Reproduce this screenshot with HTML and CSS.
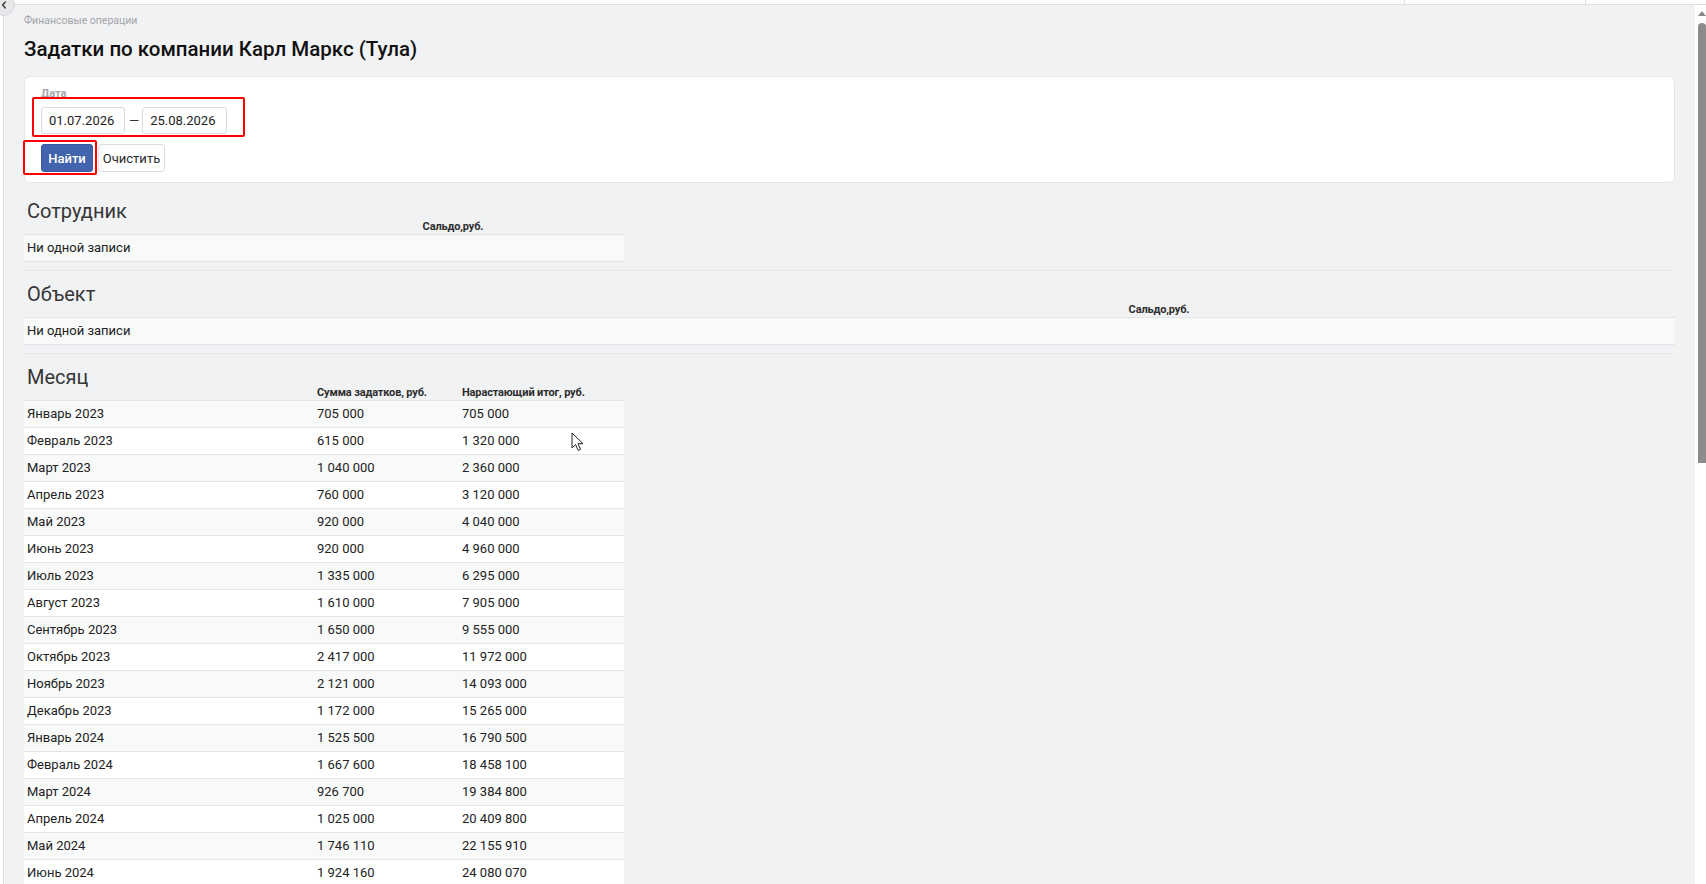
FILE: index.html
```html
<!DOCTYPE html>
<html lang="ru">
<head>
<meta charset="utf-8">
<title>Задатки по компании Карл Маркс (Тула)</title>
<link rel="stylesheet" href="styles.css">
</head>
<body>
<div class="frame">
  <div class="topbar">
    <div class="tb-seg tb-main"></div>
    <div class="tb-seg tb-a"></div>
    <div class="tb-seg tb-b"></div>
  </div>
  <div class="row">
    <div class="rail"></div>
    <main class="content">
      <div class="crumb">Финансовые операции</div>
      <h1 class="title">Задатки по компании Карл Маркс (Тула)</h1>

      <form class="card">
        <div class="label">Дата</div>
        <div class="range">
          <input class="inp" type="text" value="01.07.2026">
          <span class="dash">—</span>
          <input class="inp inp2" type="text" value="25.08.2026">
        </div>
        <div class="btns">
          <button type="button" class="btn btn-primary">Найти</button>
          <button type="button" class="btn btn-plain">Очистить</button>
        </div>
        <div class="mark mark-range"></div>
        <div class="mark mark-btn"></div>
      </form>

      <section class="report report-first">
        <h2 class="sec-title">Сотрудник</h2>
        <table class="tbl tbl-600">
          <thead><tr><th class="w-emp"></th><th class="center">Сальдо,руб.</th></tr></thead>
          <tbody><tr class="odd"><td colspan="2">Ни одной записи</td></tr></tbody>
        </table>
      </section>
      <hr class="sep">

      <section class="report">
        <h2 class="sec-title">Объект</h2>
        <table class="tbl tbl-full">
          <thead><tr><th class="w-obj"></th><th class="center">Сальдо,руб.</th></tr></thead>
          <tbody><tr class="odd"><td colspan="2">Ни одной записи</td></tr></tbody>
        </table>
      </section>
      <hr class="sep">

      <section class="report">
        <h2 class="sec-title">Месяц</h2>
        <table class="tbl tbl-600">
          <thead><tr><th class="w-m1"></th><th class="w-m2">Сумма задатков, руб.</th><th>Нарастающий итог, руб.</th></tr></thead>
          <tbody>
            <tr class="odd"><td>Январь 2023</td><td>705 000</td><td>705 000</td></tr>
            <tr><td>Февраль 2023</td><td>615 000</td><td>1 320 000</td></tr>
            <tr class="odd"><td>Март 2023</td><td>1 040 000</td><td>2 360 000</td></tr>
            <tr><td>Апрель 2023</td><td>760 000</td><td>3 120 000</td></tr>
            <tr class="odd"><td>Май 2023</td><td>920 000</td><td>4 040 000</td></tr>
            <tr><td>Июнь 2023</td><td>920 000</td><td>4 960 000</td></tr>
            <tr class="odd"><td>Июль 2023</td><td>1 335 000</td><td>6 295 000</td></tr>
            <tr><td>Август 2023</td><td>1 610 000</td><td>7 905 000</td></tr>
            <tr class="odd"><td>Сентябрь 2023</td><td>1 650 000</td><td>9 555 000</td></tr>
            <tr><td>Октябрь 2023</td><td>2 417 000</td><td>11 972 000</td></tr>
            <tr class="odd"><td>Ноябрь 2023</td><td>2 121 000</td><td>14 093 000</td></tr>
            <tr><td>Декабрь 2023</td><td>1 172 000</td><td>15 265 000</td></tr>
            <tr class="odd"><td>Январь 2024</td><td>1 525 500</td><td>16 790 500</td></tr>
            <tr><td>Февраль 2024</td><td>1 667 600</td><td>18 458 100</td></tr>
            <tr class="odd"><td>Март 2024</td><td>926 700</td><td>19 384 800</td></tr>
            <tr><td>Апрель 2024</td><td>1 025 000</td><td>20 409 800</td></tr>
            <tr class="odd"><td>Май 2024</td><td>1 746 110</td><td>22 155 910</td></tr>
            <tr><td>Июнь 2024</td><td>1 924 160</td><td>24 080 070</td></tr>
          </tbody>
        </table>
      </section>

      <svg class="cursor" width="14" height="20" viewBox="0 0 14 20"><path d="M1 1 L1 16 L4.6 12.6 L7.2 18.4 L9.6 17.3 L7 11.7 L12 11.7 Z" fill="#fff" stroke="#222" stroke-width="1" stroke-linejoin="round"/></svg>
    </main>
    <div class="scrollbar">
      <div class="sb-arrow"></div>
      <div class="sb-thumb"></div>
    </div>
  </div>
  <div class="toggle"><svg width="8" height="8" viewBox="0 0 8 8"><path d="M5.3 1 L2.6 4 L5.3 7" fill="none" stroke="#3a3a3a" stroke-width="1.4" stroke-linecap="round" stroke-linejoin="round"/></svg></div>
</div>
</body>
</html>
```

FILE: styles.css
```css
html, body {
  margin: 0;
  padding: 0;
  background: #ffffff;
  font-family: Roboto, "Noto Sans", sans-serif;
  color: #1f1f1f;
  overflow: hidden;
}

.frame {
  position: relative;
  width: 1706px;
  height: 884px;
  display: flex;
  flex-direction: column;
  overflow: hidden;
}

.topbar {
  height: 4px;
  flex: 0 0 4px;
  display: flex;
  background: #ffffff;
  border-bottom: 1px solid #dcdee2;
}
.tb-seg { height: 100%; }
.tb-main { width: 1404px; border-right: 1px solid #dcdee2; }
.tb-a { width: 180px; border-right: 1px solid #dcdee2; }
.tb-b { flex: 1; }

.toggle {
  position: absolute;
  z-index: 5;
  left: -7px;
  top: -6px;
  width: 22px;
  height: 22px;
  box-sizing: border-box;
  border-radius: 50%;
  background: #e6e7e9;
  border: 1px solid #d6d8db;
  display: flex;
  align-items: center;
  justify-content: center;
}
.toggle svg { display: block; }

.row {
  flex: 1;
  display: flex;
  min-height: 0;
}

.rail {
  width: 3px;
  flex: 0 0 3px;
  background: #ffffff;
  border-right: 1px solid #dcdee2;
}

.content {
  position: relative;
  flex: 1;
  background: #f1f2f4;
  padding: 9px 20px 0 20px;
  min-width: 0;
}

.crumb {
  font-size: 10.5px;
  line-height: 14px;
  color: #a3a5a8;
}

.title {
  margin: 7px 0 13px 0;
  font-size: 20.5px;
  line-height: 28px;
  font-weight: 500;
  color: #111111;
}

.card {
  position: relative;
  margin: 0;
  background: #ffffff;
  border: 1px solid #e4e6e9;
  border-radius: 6px;
  padding: 10px 16px 10px 16px;
}

.label {
  font-size: 11px;
  line-height: 14px;
  font-weight: 700;
  color: #a4a6a9;
}

.range {
  display: flex;
  align-items: center;
  margin-top: 6px;
  height: 27px;
}

.inp {
  box-sizing: border-box;
  width: 84px;
  height: 27px;
  border: 1px solid #d9dbde;
  border-radius: 3px;
  padding: 0 0 0 7px;
  font-family: Roboto, sans-serif;
  font-size: 13px;
  color: #222222;
  background: #ffffff;
  outline: none;
}
.inp2 { width: 85px; }

.dash {
  font-size: 13px;
  color: #333333;
  margin: 0 3px 0 4px;
  line-height: 27px;
}

.btns {
  display: flex;
  gap: 5px;
  margin-top: 10px;
}

.btn {
  box-sizing: border-box;
  height: 28px;
  border-radius: 3px;
  font-family: Roboto, sans-serif;
  font-size: 13px;
  padding: 0;
  cursor: pointer;
}
.btn-primary {
  width: 52px;
  background: #4263ad;
  border: 1px solid #3b5aa1;
  color: #ffffff;
  font-weight: 500;
}
.btn-plain {
  width: 67px;
  background: #ffffff;
  border: 1px solid #dcdee1;
  color: #2b2b2b;
}

.mark {
  position: absolute;
  border: 2px solid #ff0000;
  border-radius: 2px;
  box-sizing: border-box;
  pointer-events: none;
}
.mark-range { left: 7px; top: 20px; width: 213px; height: 40px; }
.mark-btn { left: -2px; top: 63px; width: 74px; height: 35px; }

.report { margin: 0; }
.report-first { margin-top: 17px; }

.sec-title {
  margin: 0;
  font-family: Roboto, "Noto Sans", sans-serif;
  font-size: 20px;
  line-height: 22px;
  font-weight: 400;
  color: #363636;
  padding-left: 3px;
}

.tbl {
  border-collapse: collapse;
  table-layout: fixed;
  font-size: 13px;
  color: #222222;
}
.tbl-600 { width: 600px; }
.tbl-full { width: 100%; }

.tbl th, .tbl td { box-sizing: border-box; }

.tbl th {
  font-size: 11px;
  font-weight: 700;
  color: #2d2d2d;
  text-align: left;
  line-height: 9px;
  padding: 0 3px 3px 3px;
  letter-spacing: -0.15px;
  white-space: nowrap;
}
.tbl th.center { text-align: center; }
.w-emp { width: 258px; }
.w-obj { width: 619px; }
.w-m1 { width: 290px; }
.w-m2 { width: 145px; }

.tbl td {
  height: 27px;
  line-height: 26px;
  padding: 0 3px;
  border-top: 1px solid #e2e4e8;
  border-bottom: 1px solid #e2e4e8;
  background: #ffffff;
  white-space: nowrap;
}
.tbl tr.odd td { background: #f8f9f9; }

.sep {
  margin: 8px 0 12px 0;
  border: 0;
  height: 1px;
  background: #e9e8e8;
}

.cursor {
  position: absolute;
  left: 567px;
  top: 427px;
}

.scrollbar {
  position: relative;
  width: 11px;
  flex: 0 0 11px;
  background: #ffffff;
}
.sb-arrow {
  position: absolute;
  left: 3px;
  top: 6px;
  width: 0;
  height: 0;
  border-left: 4px solid transparent;
  border-right: 4px solid transparent;
  border-bottom: 5px solid #8a8a8a;
}
.sb-thumb {
  position: absolute;
  left: 3px;
  right: 0;
  top: 18px;
  height: 440px;
  background: #8c8c8c;
  border-radius: 4px 4px 0 0;
}
```
